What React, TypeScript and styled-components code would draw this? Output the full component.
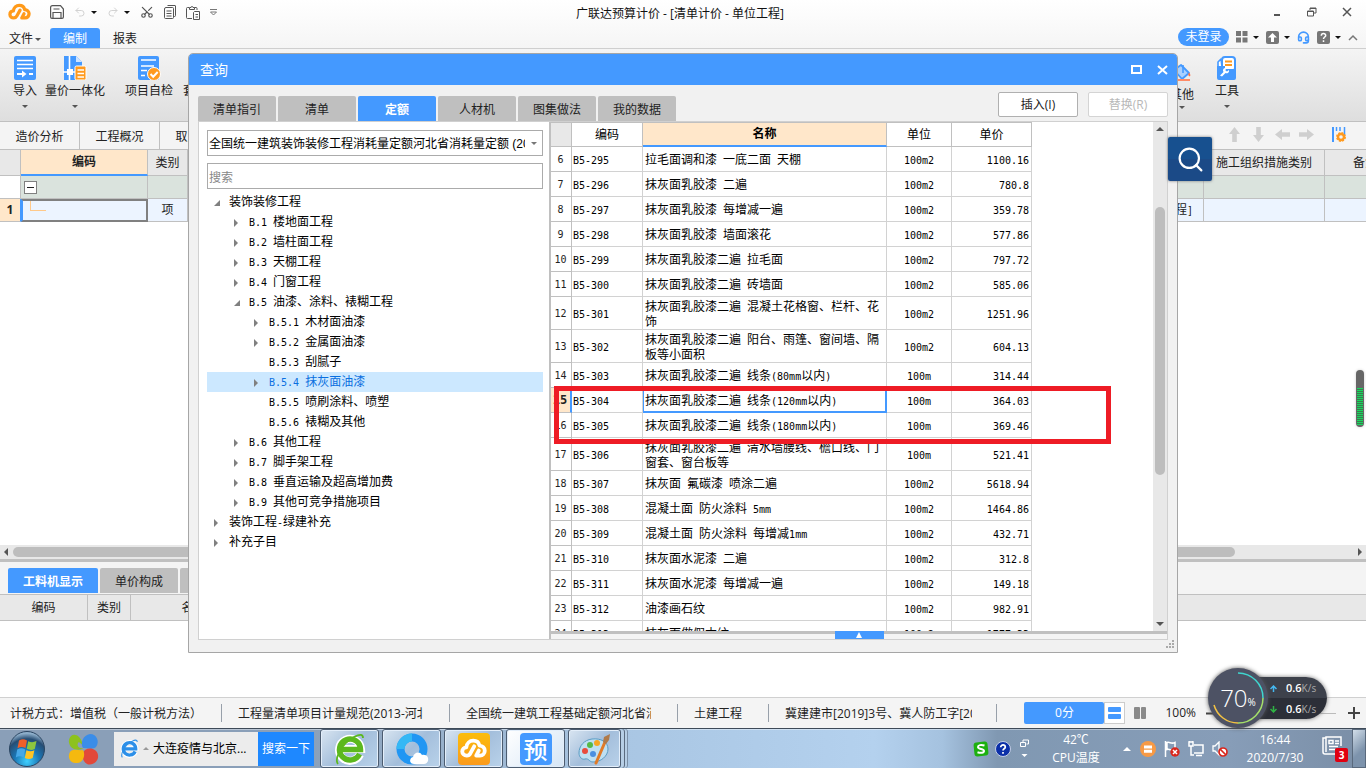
import React from "react";
import styled, { createGlobalStyle, css } from "styled-components";
import { Undo2, Redo2, Scissors, Search, ClipboardPaste, Headset } from "lucide-react";

const BLUE = "#4499ff";
const LINE = "#c0c0c0";
const PEACH = "#ffe7ca";

const GlobalStyle = createGlobalStyle`
  * { box-sizing: border-box; }
  body {
    margin: 0;
    background: #fff;
    color: #222;
    font: 12px/16px "Open Sans", "Noto Sans CJK SC", sans-serif;
  }
  button, input, select { font: inherit; color: inherit; margin: 0; padding: 0; border: 0; background: none; }
  svg { display: block; flex: none; }
`;

/* ---------- shared parts ---------- */

const Screen = styled.div`
  position: relative;
  display: flex;
  flex-direction: column;
  min-height: 100vh;
  overflow: hidden;
`;

const Half = styled.span`
  font-family: "DejaVu Sans Mono", monospace;
  font-size: 10px;
  white-space: pre-wrap;
`;

/* Latin runs take half the width of a Chinese character, as in a bitmap song face. */
function Song({ children }: { children: string }) {
  return (
    <>
      {children.split(/([\x20-\x7e]+)/).map((part, i) =>
        i % 2 ? <Half key={i}>{part}</Half> : part
      )}
    </>
  );
}

const Caret = styled.i<{ $dir?: "up" | "down" | "left" | "right" | "open"; $size?: number; $color?: string }>`
  flex: none;
  width: 0;
  height: 0;
  border: ${(p) => p.$size ?? 3}px solid transparent;
  ${(p) => {
    const c = p.$color ?? "#555";
    switch (p.$dir ?? "down") {
      case "up": return css`border-bottom-color: ${c}; border-top-width: 0;`;
      case "left": return css`border-right-color: ${c}; border-left-width: 0;`;
      case "right": return css`border-left-color: ${c}; border-right-width: 0;`;
      case "open": return css`border-right-color: ${c}; border-bottom-color: ${c};`;
      default: return css`border-top-color: ${c}; border-bottom-width: 0;`;
    }
  }}
`;

const Cloud = ({ color, width }: { color: string; width: number }) => (
  <svg width={width} viewBox="0 0 24 18" fill="none" stroke={color} strokeWidth="3.4" strokeLinecap="round" strokeLinejoin="round">
    <path d="M12.6 7.4 9.2 13.6C8.5 15 7.5 15.6 6 15.6 3.7 15.6 2 14 2 12c0-2.200 1.600-3.600 3.600-3.700C6 4.800 8.500 2.400 11.800 2.400c3 0 5 1.800 5.600 4.400C20 7 22 8.800 22 11.300c0 2.500-1.800 4.300-4.200 4.300H14.400l2.300-4.400" />
  </svg>
);

/* ---------- title bar and menu ---------- */

const Header = styled.header`
  background: linear-gradient(#fff, #f5f5f5);
  border-bottom: 1px solid #cfcfcf;
`;

const TitleBar = styled.div`
  display: grid;
  grid-template-columns: 1fr auto 1fr;
  align-items: center;
  height: 28px;
  padding: 0 14px 4px 8px;
`;

const Title = styled.h1`
  margin: 0;
  padding-top: 3px;
  font-size: 12px;
  font-weight: 400;
  color: #111;
`;

const QuickBar = styled.div`
  display: flex;
  align-items: center;
  gap: 10px;
`;

const QuickButton = styled.button<{ $faded?: boolean }>`
  display: flex;
  align-items: center;
  gap: 5px;
  color: ${(p) => (p.$faded ? "#d2d2d2" : "#555")};
`;

const LogoSlot = styled.div`
  width: 32px;
`;

const WindowButtons = styled.div`
  display: flex;
  justify-content: flex-end;
  gap: 25px;
  color: #555;
`;

const MenuBar = styled.nav`
  display: flex;
  align-items: center;
  height: 20px;
`;

const MenuItem = styled.button<{ $active?: boolean }>`
  display: flex;
  align-items: center;
  justify-content: center;
  gap: 2px;
  width: 50px;
  height: 20px;
  padding-top: 2px;
  border-radius: 3px 3px 0 0;
  background: ${(p) => (p.$active ? BLUE : "transparent")};
  color: ${(p) => (p.$active ? "#fff" : "#222")};
`;

const MenuTools = styled.div`
  display: flex;
  align-items: center;
  gap: 7px;
  margin: 0 8px 2px auto;
`;

const LoginPill = styled.button`
  width: 51px;
  height: 18px;
  border-radius: 9px;
  background: ${BLUE};
  color: #fff;
  line-height: 18px;
`;

/* ---------- ribbon ---------- */

const Ribbon = styled.div`
  display: flex;
  gap: 6px;
  height: 73px;
  padding: 0 119px 0 9px;
  background: linear-gradient(#f4f4f4, #dedede);
  border-bottom: 1px solid ${LINE};
`;

const RibbonGroup = styled.div<{ $end?: boolean }>`
  display: flex;
  gap: ${(p) => (p.$end ? 5 : 0)}px;
  margin-left: ${(p) => (p.$end ? "auto" : 0)};
`;

const RibbonButton = styled.button<{ $width: number }>`
  display: flex;
  flex-direction: column;
  align-items: center;
  justify-content: space-between;
  width: ${(p) => p.$width}px;
  height: 59px;
  padding-top: 7px;
  white-space: nowrap;
`;

const RibbonFace = styled.span`
  display: flex;
  flex-direction: column;
  align-items: center;
  line-height: 22px;
`;

const ImportIcon = () => (
  <svg width="24" height="24" viewBox="0 0 24 24">
    <rect x="1" width="22" height="24" rx="2" fill={BLUE} />
    <path d="M4 4.500h16M4 8.500h16M4 12.500h16" stroke="#fff" strokeWidth="1.600" />
    <path d="M4 18h7M16 18h4" stroke="#fff" strokeWidth="2" />
    <path d="M9 14.500 13.500 18 9 21.500z" fill="#fff" />
  </svg>
);

const PriceIcon = () => (
  <svg width="24" height="24" viewBox="0 0 24 24">
    <path d="M1 0h12l6 6v18H1z" fill={BLUE} />
    <path d="M13 0v6h6z" fill="#cfe4ff" />
    <path d="M6.500 0v24M0 16h12" stroke="#fff" strokeWidth="1.600" />
    <rect x="4" y="13" width="6" height="6" fill="#fff" />
    <rect x="12" y="10" width="11" height="14" rx="1.500" fill="#ff9a1f" stroke="#fff" />
    <path d="M14.500 14h6.500M14.500 17.500h6.500M14.500 21h6.500" stroke="#fff" strokeWidth="1.300" />
  </svg>
);

const CheckIcon = () => (
  <svg width="24" height="24" viewBox="0 0 24 24">
    <rect x="1" width="21" height="24" rx="2" fill={BLUE} />
    <path d="M4 4h15M4 10h13M4 14.500h6M4 19.500h4" stroke="#fff" strokeWidth="1.600" />
    <circle cx="17" cy="18" r="6.500" fill="#ff9a1f" stroke="#fff" />
    <path d="m13.500 18 2.700 2.700 4.500-4.700" fill="none" stroke="#fff" strokeWidth="2" />
  </svg>
);

const BucketIcon = () => (
  <svg width="28" height="28" viewBox="0 0 28 28">
    <path d="M6 14 13 9l8 8-7 6z" fill="#a9d0ff" stroke={BLUE} strokeWidth="1.800" strokeLinejoin="round" />
    <path d="M15 9v8" stroke={BLUE} strokeWidth="1.600" />
    <path d="M21 16.500c1.500 2 2 3 .5 4-1.500-1-1.500-2-.5-4z" fill="#ff7043" />
    <path d="M4 24h18" stroke="#ff8a65" strokeWidth="2" />
  </svg>
);

const ToolboxIcon = () => (
  <svg width="24" height="24" viewBox="0 0 24 24">
    <rect x="7" y="1" width="13" height="14" rx="3" fill="#fff" stroke={BLUE} strokeWidth="2" />
    <path d="M10 5.500h7M10 9h7" stroke="#ff9a1f" strokeWidth="1.800" />
    <path d="M6 3 3 6v5h4z" fill="#fff" stroke={BLUE} strokeWidth="1.600" strokeLinejoin="round" />
    <path d="M2 10h8v3h9l2-1v10a2 2 0 0 1-2 2H4a2 2 0 0 1-2-2z" fill={BLUE} />
    <path d="m5 19.500 3.500-3.500a2.500 2.500 0 0 1 2.500-4l-.5 2.500 1.500 1 2-1.500a2.500 2.500 0 0 1-3.500 3L7 20.500z" fill="#fff" />
  </svg>
);

/* ---------- workspace ---------- */

const PageTabs = styled.nav`
  display: flex;
  align-items: center;
  height: 27px;
  background: #f4f4f4;
`;

const PageTab = styled.button`
  width: 80px;
  height: 27px;
  padding-top: 2px;
  border-right: 1px solid ${LINE};
`;

const RowTools = styled.div`
  display: flex;
  align-items: center;
  gap: 9px;
  margin: 0 19px 2px auto;
`;

const Grid = styled.div`
  flex: 1;
  min-height: 395px;
  overflow: hidden;
`;

const Sheet = styled.table`
  width: calc(100% + 40px);
  table-layout: fixed;
  border-collapse: separate;
  border-spacing: 0;
  color: #222;

  th, td {
    height: 23px;
    padding: 0;
    border-right: 1px solid ${LINE};
    border-bottom: 1px solid ${LINE};
    text-align: center;
    font-weight: 400;
    white-space: nowrap;
    overflow: hidden;
  }
  thead th {
    height: 27px;
    background: #e8e8e8;
    border-top: 1px solid ${LINE};
  }
  thead th.active {
    background: ${PEACH};
    border-bottom: 2px solid ${BLUE};
    font-weight: 700;
  }
  tr.group td { background: #dae3dd; }
  tr.group td:first-child { background: #fff; }
  tr.item td { background: #ecf4ff; }
  tr.item td:first-child { background: ${PEACH}; font-weight: 700; border-right: 1px solid ${BLUE}; }
  tr.item td.selected { border: 2px solid #808080; border-left-color: ${BLUE}; }
`;

const Expander = styled.button`
  display: block;
  width: 13px;
  height: 13px;
  margin-left: 3px;
  border: 1px solid #808080;
  background: linear-gradient(#222, #222) center / 7px 1px no-repeat #fff;
`;

const Branch = styled.span`
  display: block;
  width: 16px;
  height: 10px;
  margin: -10px 0 0 7px;
  border: solid #ffc98a;
  border-width: 0 0 1px 1px;
`;

const HScroll = styled.div`
  display: flex;
  align-items: center;
  justify-content: space-between;
  height: 14px;
  padding: 0 4px;
  background: #e8e8e8;
`;

const HThumb = styled.div`
  width: 90%;
  height: 10px;
  margin-left: 5px;
  margin-right: auto;
  border-radius: 5px;
  background: #bdbdbd;
`;

const Detail = styled.section`
  border-top: 3px solid ${LINE};
  background: #fff;
  height: 138px;
  overflow: hidden;
`;

const TabStrip = styled.div<{ $inset?: boolean }>`
  display: flex;
  align-items: flex-end;
  gap: 2px;
  ${(p) => p.$inset && css`height: 33px; padding: 0 8px 1px; background: #f4f4f4; border-bottom: 1px solid ${LINE};`}
`;

const Tab = styled.button<{ $active?: boolean; $width?: number }>`
  width: ${(p) => p.$width ?? 78}px;
  height: 25px;
  padding-top: 2px;
  border-radius: 2px 2px 0 0;
  background: ${(p) => (p.$active ? BLUE : "#bfbfbf")};
  color: ${(p) => (p.$active ? "#fff" : "#222")};
  font-weight: ${(p) => (p.$active ? 700 : 400)};
`;

const DetailTable = styled.table`
  width: 100%;
  table-layout: fixed;
  border-spacing: 0;
  th {
    height: 26px;
    padding: 0;
    background: #e8e8e8;
    border-right: 1px solid ${LINE};
    border-bottom: 1px solid ${LINE};
    font-weight: 400;
  }
  th:last-child { border-right: 0; }
`;

/* ---------- query dialog ---------- */

const Dialog = styled.section`
  position: absolute;
  top: 53px;
  left: 188px;
  right: 188px;
  height: 600px;
  display: flex;
  flex-direction: column;
  border: 1px solid #a6a6a6;
  border-radius: 5px 5px 0 0;
  background: #f1f1f1;
`;

const DialogHead = styled.header`
  display: flex;
  align-items: center;
  height: 31px;
  padding: 0 9px 0 11px;
  border-radius: 4px 4px 0 0;
  background: ${BLUE};
  color: #fff;
  h2 { margin: 0 auto 0 0; font-size: 14px; font-weight: 400; }
  button { margin-left: 15px; }
`;

const DialogTools = styled.div`
  display: flex;
  align-items: flex-end;
  height: 36px;
  padding: 0 9px;
`;

const Actions = styled.div`
  display: flex;
  gap: 10px;
  margin: 0 0 4px auto;
`;

const ActionButton = styled.button`
  width: 80px;
  height: 25px;
  border: 1px solid #b0b0b0;
  border-radius: 2px;
  background: #fff;
  &:disabled { color: #b8b8b8; border-color: #d4d4d4; }
`;

const DialogBody = styled.div`
  display: flex;
  flex: 1;
  min-height: 0;
  margin: 0 9px 12px;
  border: 1px solid #d0d0d0;
  background: #fff;
`;

const TreePane = styled.div`
  width: 350px;
  padding: 8px 6px 0 8px;
  color: #000;
`;

const SelectBox = styled.label`
  display: flex;
  align-items: center;
  height: 26px;
  padding-right: 5px;
  border: 1px solid #ababab;
  select {
    flex: 1;
    min-width: 0;
    height: 24px;
    padding: 1px 0 0 1px;
    margin-right: 6px;
    appearance: none;
    outline: 0;
    overflow: hidden;
    font-family: "Liberation Sans", "Noto Sans CJK SC", sans-serif;
  }
`;

const SearchBox = styled.input`
  display: block;
  width: 100%;
  height: 26px;
  margin: 7px 0 3px;
  padding: 2px 0 0 1px;
  border: 1px solid #ababab;
  &::placeholder { color: #888; opacity: 1; }
`;

const Tree = styled.ul`
  margin: 0;
  padding: 0;
  list-style: none;
`;

const TreeRow = styled.li<{ $level: number; $selected?: boolean }>`
  display: flex;
  align-items: center;
  height: 20px;
  padding-left: ${(p) => 6 + p.$level * 20}px;
  background: ${(p) => (p.$selected ? "#cce8ff" : "transparent")};
  color: ${(p) => (p.$selected ? "#0a6fe0" : "#000")};
`;

const Twist = styled.span`
  display: flex;
  width: 16px;
  padding: 1px 0 0 1px;
`;

const ResultPane = styled.div`
  position: relative;
  display: flex;
  flex-direction: column;
  flex: 1;
  min-width: 0;
  border-left: 2px solid ${LINE};
`;

const ResultScroll = styled.div`
  display: flex;
  justify-content: space-between;
  flex: 1;
  min-height: 0;
  overflow: hidden;
`;

const Results = styled.table`
  width: 481px;
  height: max-content;
  table-layout: fixed;
  border-collapse: separate;
  border-spacing: 0;
  color: #000;

  th, td {
    height: 25px;
    padding: 2px 0 0;
    border-right: 1px solid #d2d2d2;
    border-bottom: 1px solid #d2d2d2;
    text-align: center;
    font-weight: 400;
    line-height: 14px;
  }
  thead th {
    padding: 0;
    border-top: 1px solid ${LINE};
    border-color: ${LINE};
  }
  thead th:first-child { background: #e8e8e8; }
  thead th.active {
    background: ${PEACH};
    border-bottom: 2px solid ${BLUE};
    font-weight: 700;
  }
  tbody th { color: #222; border-color: ${LINE}; padding: 0 1px 0 0; }
  td.code { text-align: left; padding-left: 1px; }
  td.name { text-align: left; padding-left: 2px; }
  td.price { text-align: right; padding-right: 2px; }
  tr.tall > * { height: 33px; }
  tr.current th {
    background: ${PEACH};
    font-weight: 700;
    border-right: 2px solid ${BLUE};
    ${Half} { font-size: 12px; }
  }
  tr.current td.name { box-shadow: inset 1px 1px ${BLUE}, inset -1px -1px ${BLUE}; border-color: ${BLUE}; }
`;

const VScroll = styled.div`
  display: flex;
  flex-direction: column;
  align-items: center;
  width: 14px;
  padding: 5px 0;
  background: #e8e8e8;
`;

const VThumb = styled.div`
  width: 10px;
  height: 268px;
  margin: 76px 0 auto;
  border-radius: 5px;
  background: #bdbdbd;
`;

const Fold = styled.div`
  display: flex;
  justify-content: center;
  height: 8px;
  border-top: 3px solid ${LINE};
  background: #f4f4f4;
`;

const FoldButton = styled.button`
  display: flex;
  align-items: center;
  justify-content: center;
  width: 49px;
  height: 8px;
  margin-top: -3px;
  background: ${BLUE};
`;

const Marker = styled.div`
  position: absolute;
  top: 264px;
  left: 3px;
  width: 557px;
  height: 58px;
  border: 5px solid #ee1c25;
`;

const Grip = styled.svg`
  position: absolute;
  right: 3px;
  bottom: 4px;
`;

/* ---------- desktop overlays ---------- */

const FloatSearch = styled.button`
  position: absolute;
  top: 137px;
  right: 154px;
  display: flex;
  align-items: center;
  justify-content: center;
  width: 44px;
  height: 44px;
  border-radius: 2px;
  background: linear-gradient(#17508f 50%, #1b4a87 50%);
  box-shadow: 0 0 3px #777;
  color: #fff;
`;

const Meter = styled.div`
  position: absolute;
  top: 370px;
  right: 2px;
  width: 8px;
  height: 57px;
  padding: 18px 1px 2px;
  border-radius: 4px;
  background: #666;
  box-shadow: 0 0 3px #ccc;
  &::before {
    content: "";
    display: block;
    height: 100%;
    background: repeating-linear-gradient(#19d65e 0 1px, #3c7a50 1px 2px);
  }
`;

const Gadget = styled.aside`
  position: absolute;
  right: 39px;
  bottom: 40px;
  display: flex;
  align-items: center;
  width: 119px;
  height: 60px;
`;

const GadgetDial = styled.div`
  position: relative;
  z-index: 1;
  display: flex;
  align-items: center;
  justify-content: center;
  width: 60px;
  height: 60px;
  border-radius: 50%;
  background: #4d5264;
  box-shadow: 0 0 4px #555;
  color: #fff;
  font: 300 24px/24px "Open Sans", sans-serif;
  small { font-size: 10px; font-weight: 400; padding-top: 8px; }
  svg { position: absolute; inset: 0; }
`;

const GadgetSpeeds = styled.div`
  flex: 1;
  display: grid;
  height: 42px;
  margin-left: -20px;
  padding-left: 22px;
  border-radius: 0 21px 21px 0;
  background: linear-gradient(#3d414b 50%, #2c2f38 50%);
  box-shadow: 0 0 4px #777;
  color: #fff;
  font-size: 11px;
  span { display: flex; align-items: center; gap: 9px; padding-top: 1px; }
  b { font-weight: 600; }
  em { font-style: normal; font-weight: 400; font-size: 10px; color: #aaa; }
`;

/* ---------- status bar ---------- */

const Status = styled.footer`
  display: flex;
  align-items: center;
  height: 31px;
  border-top: 1px solid #d0d0d0;
  background: #f4f4f4;
`;

const StatusItem = styled.div<{ $cell: number; $text: number }>`
  flex: none;
  width: ${(p) => p.$cell}px;
  height: 18px;
  border-right: 1px solid #98a0aa;
  line-height: 20px;
  > span {
    display: block;
    width: ${(p) => p.$text}px;
    margin-left: 16px;
    overflow: hidden;
    white-space: nowrap;
  }
  &:first-child > span { margin-left: 10px; }
`;

const StatusTools = styled.div`
  display: flex;
  align-items: center;
  margin: 0 6px 0 auto;
`;

const Score = styled.button`
  width: 80px;
  height: 22px;
  border-radius: 2px;
  background: ${BLUE};
  color: #fff;
`;

const ViewButton = styled.button<{ $on?: boolean }>`
  display: flex;
  align-items: center;
  justify-content: center;
  width: 21px;
  height: 22px;
  border: 1px solid ${(p) => (p.$on ? "#ccc" : "transparent")};
  background: ${(p) => (p.$on ? "#fff" : "transparent")};
  & + & { margin-left: 5px; }
`;

const Zoom = styled.label`
  display: flex;
  align-items: center;
  gap: 10px;
  margin-left: 14px;
  color: #222;
  input {
    appearance: none;
    width: 107px;
    height: 1px;
    margin: 0 2px;
    background: #bbb;
  }
  input::-webkit-slider-thumb {
    appearance: none;
    width: 11px;
    height: 11px;
    border: 1px solid #888;
    border-radius: 50%;
    background: #f4f4f4;
  }
`;

/* ---------- taskbar ---------- */

const Taskbar = styled.footer`
  display: flex;
  align-items: center;
  height: 40px;
  border-top: 1px solid #3e4a58;
  background:
    linear-gradient(#ffffff66 0 1px, transparent 1px),
    linear-gradient(90deg, #8a9fb8 0, #8a9fb8 22%, #a9c6e3 45%, #b4d1ee 64%, #a5c2df 69%, #8098b2 73%, #879db8 90%, #7a8ea6);
`;

const TaskIcon = styled.button`
  margin-left: 9px;
`;

const NewsBox = styled.div`
  display: flex;
  align-items: center;
  gap: 4px;
  width: 144px;
  height: 34px;
  margin-left: 14px;
  padding-left: 6px;
  background: #ececec;
  color: #000;
  white-space: nowrap;
`;

const NewsButton = styled.button`
  width: 56px;
  height: 34px;
  margin-right: 6px;
  background: #1e88ff;
  color: #fff;
`;

const TaskButton = styled.button<{ $active?: boolean; $last?: boolean }>`
  display: flex;
  align-items: center;
  justify-content: center;
  width: ${(p) => (p.$last ? 53 : 59)}px;
  height: 39px;
  margin-right: 3px;
  border: 1px solid #4c5c70;
  border-radius: 3px;
  box-shadow: inset 0 0 0 1px #e3eefa;
  background: ${(p) =>
    p.$active ? "linear-gradient(135deg, #fff, #d5e5f5)" : "linear-gradient(135deg, #d9e5f1, #a3bedb 50%, #b9d2ea)"};
  ${(p) => p.$last && css`box-shadow: inset 0 0 0 1px #e3eefa, 3px 0 #b7cfe6, 4px 0 #5b6c80, 6px 0 #b7cfe6, 7px 0 #7b90a8;`}
`;

const AppTile = styled.span<{ $orange?: boolean }>`
  display: flex;
  align-items: center;
  justify-content: center;
  width: 32px;
  height: 32px;
  border-radius: 4px;
  background: ${(p) => (p.$orange ? "linear-gradient(#fbbd0a, #fb9a1c)" : BLUE)};
  color: #fff;
  font: 500 24px/30px "Noto Sans CJK SC", sans-serif;
`;

const Tray = styled.div`
  display: flex;
  align-items: center;
  gap: 9px;
  height: 39px;
  margin-left: auto;
  color: #fff;
`;

const TrayGroup = styled.div<{ $gap: number }>`
  display: flex;
  align-items: center;
  gap: ${(p) => p.$gap}px;
`;

const TrayText = styled.div<{ $width: number }>`
  width: ${(p) => p.$width}px;
  text-align: center;
  line-height: 18px;
`;

const NoteBadge = styled.div`
  position: relative;
  width: 26px;
  height: 26px;
  b {
    position: absolute;
    right: 0;
    bottom: 0;
    width: 13px;
    height: 14px;
    background: #e00010;
    border-radius: 2px;
    font-size: 10px;
    line-height: 14px;
    text-align: center;
  }
`;

const ShowDesktop = styled.button`
  width: 14px;
  height: 39px;
  margin-left: -5px;
  border: 1px solid #5a6a7d;
  background: linear-gradient(135deg, #d2dee9, #7d93ac 60%);
`;

/* ---------- data ---------- */

type Node = [level: number, state: "open" | "closed" | "leaf", label: string];

const TREE: Node[] = [
  [0, "open", "装饰装修工程"],
  [1, "closed", "B.1 楼地面工程"],
  [1, "closed", "B.2 墙柱面工程"],
  [1, "closed", "B.3 天棚工程"],
  [1, "closed", "B.4 门窗工程"],
  [1, "open", "B.5 油漆、涂料、裱糊工程"],
  [2, "closed", "B.5.1 木材面油漆"],
  [2, "closed", "B.5.2 金属面油漆"],
  [2, "leaf", "B.5.3 刮腻子"],
  [2, "closed", "B.5.4 抹灰面油漆"],
  [2, "leaf", "B.5.5 喷刷涂料、喷塑"],
  [2, "leaf", "B.5.6 裱糊及其他"],
  [1, "closed", "B.6 其他工程"],
  [1, "closed", "B.7 脚手架工程"],
  [1, "closed", "B.8 垂直运输及超高增加费"],
  [1, "closed", "B.9 其他可竞争措施项目"],
  [0, "closed", "装饰工程-绿建补充"],
  [0, "closed", "补充子目"],
];
const SELECTED_NODE = 9;

type Quota = [name: string, unit: string, price: string];

const QUOTAS: Quota[] = [
  ["拉毛面调和漆 一底二面 天棚", "100m2", "1100.16"],
  ["抹灰面乳胶漆 二遍", "100m2", "780.8"],
  ["抹灰面乳胶漆 每增减一遍", "100m2", "359.78"],
  ["抹灰面乳胶漆 墙面滚花", "100m2", "577.86"],
  ["抹灰面乳胶漆二遍 拉毛面", "100m2", "797.72"],
  ["抹灰面乳胶漆二遍 砖墙面", "100m2", "585.06"],
  ["抹灰面乳胶漆二遍 混凝土花格窗、栏杆、花饰", "100m2", "1251.96"],
  ["抹灰面乳胶漆二遍 阳台、雨篷、窗间墙、隔板等小面积", "100m2", "604.13"],
  ["抹灰面乳胶漆二遍 线条(80mm以内)", "100m", "314.44"],
  ["抹灰面乳胶漆二遍 线条(120mm以内)", "100m", "364.03"],
  ["抹灰面乳胶漆二遍 线条(180mm以内)", "100m", "369.46"],
  ["抹灰面乳胶漆二遍 清水墙腰线、檐口线、门窗套、窗台板等", "100m", "521.41"],
  ["抹灰面 氟碳漆 喷涂二遍", "100m2", "5618.94"],
  ["混凝土面 防火涂料 5mm", "100m2", "1464.86"],
  ["混凝土面 防火涂料 每增减1mm", "100m2", "432.71"],
  ["抹灰面水泥漆 二遍", "100m2", "312.8"],
  ["抹灰面水泥漆 每增减一遍", "100m2", "149.18"],
  ["油漆画石纹", "100m2", "982.91"],
  ["抹灰面做假木纹", "100m2", "1777.33"],
];
const FIRST_ROW = 6;
const FIRST_CODE = 295;
const CURRENT_ROW = 15;

/* ---------- sections ---------- */

function AppHeader() {
  return (
    <Header>
      <TitleBar>
        <QuickBar>
          <LogoSlot><Cloud color="#ff9a1a" width={23} /></LogoSlot>
          <QuickButton aria-label="保存">
            <svg width="14" height="14" viewBox="0 0 14 14" fill="none" stroke="currentColor" strokeWidth="1.200">
              <path d="M.6 2.500V12a1.400 1.400 0 0 0 1.400 1.400h10A1.400 1.400 0 0 0 13.400 12V4L10.500.6H2.500A1.900 1.900 0 0 0 .6 2.500zM3 13V7.500h8V13M3.500 4h6" />
            </svg>
          </QuickButton>
          <QuickButton $faded aria-label="撤销"><Undo2 size={12} /><Caret $color="#111" /></QuickButton>
          <QuickButton $faded aria-label="恢复"><Redo2 size={12} /><Caret $color="#111" /></QuickButton>
          <QuickButton aria-label="剪切"><Scissors size={14} strokeWidth={2} transform="rotate(-90)" /></QuickButton>
          <QuickButton aria-label="复制">
            <svg width="12" height="14" viewBox="0 0 12 14" fill="none" stroke="currentColor">
              <path d="M3.500.5H11a.5.5 0 0 1 .5.5v9.500a1 1 0 0 1-1 1H9.500M2 2.500h6.500a1 1 0 0 1 1 1v9a1 1 0 0 1-1 1H1.500a1 1 0 0 1-1-1V4A1.500 1.500 0 0 1 2 2.500zM2.500 6h5M2.500 8.500h5M2.500 11h5" />
            </svg>
          </QuickButton>
          <QuickButton aria-label="粘贴">
            <svg width="14" height="15" viewBox="0 0 14 15" fill="none" stroke="currentColor">
              <path d="M6 13.500H1.500a1 1 0 0 1-1-1v-9a1 1 0 0 1 1-1H3M8.500 2.500h1.500a1 1 0 0 1 1 1V5M3.500 4.500h5v-2H7a1 1 0 0 0-2 0H3.500zM8.500 6.500h5v8h-6v-7zM9.500 9.500h2.500M9.500 12h2.500" />
            </svg>
          </QuickButton>
          <QuickButton aria-label="更多">
            <svg width="7" height="7" viewBox="0 0 7 7" fill="none" stroke="#777"><path d="M0 .5h7M.5 3h6l-3 3z" /></svg>
          </QuickButton>
        </QuickBar>
        <Title>广联达预算计价 - [清单计价 - 单位工程]</Title>
        <WindowButtons>
          <button aria-label="最小化"><svg width="10" height="10" viewBox="0 0 10 10"><path d="M2 8h6" stroke="currentColor" strokeWidth="2" /></svg></button>
          <button aria-label="还原">
            <svg width="10" height="10" viewBox="0 0 10 10" fill="none" stroke="currentColor"><path d="M3 3V1h6v5H7M.5 4h6v5h-6zM.5 4.500h6M3 1.500h6" /></svg>
          </button>
          <button aria-label="关闭"><svg width="10" height="10" viewBox="0 0 10 10"><path d="m1 1 8 8M9 1 1 9" stroke="currentColor" strokeWidth="1.500" /></svg></button>
        </WindowButtons>
      </TitleBar>
      <MenuBar>
        <MenuItem>文件<Caret $size={3} /></MenuItem>
        <MenuItem $active>编制</MenuItem>
        <MenuItem>报表</MenuItem>
        <MenuTools>
          <LoginPill>未登录</LoginPill>
          <QuickButton aria-label="布局">
            <svg width="12" height="12" viewBox="0 0 12 12" fill="#777"><path d="M0 0h5v5H0zM6.500 0h5v5h-5zM0 6.500h5v5H0zM6.500 6.500h5v5h-5z" /></svg>
            <Caret $color="#111" />
          </QuickButton>
          <QuickButton aria-label="升级">
            <svg width="13" height="13" viewBox="0 0 13 13"><rect width="13" height="13" rx="2" fill="#777" /><path d="M6.500 2 11 6.500H8V11H5V6.500H2z" fill="#fff" /></svg>
            <Caret $color="#111" />
          </QuickButton>
          <QuickButton aria-label="客服"><Headset size={13} color={BLUE} strokeWidth={3} /></QuickButton>
          <QuickButton aria-label="帮助">
            <svg width="13" height="13" viewBox="0 0 13 13"><rect width="13" height="13" rx="2" fill="#777" /><path d="M4.300 4.800c0-3 4.600-2.800 4.400-.2C8.600 6 6.500 6.200 6.500 8M6.500 9.300V11" fill="none" stroke="#fff" strokeWidth="1.500" /></svg>
            <Caret $color="#111" />
          </QuickButton>
          <QuickButton aria-label="收起"><svg width="10" height="7" viewBox="0 0 10 7" fill="none" stroke="#777" strokeWidth="1.500"><path d="m1 6 4-4 4 4" /></svg></QuickButton>
        </MenuTools>
      </MenuBar>
    </Header>
  );
}

function RibbonItem({ icon, label, width, menu = true }: { icon: React.ReactNode; label: string; width: number; menu?: boolean }) {
  return (
    <RibbonButton $width={width}>
      <RibbonFace>{icon}{label}</RibbonFace>
      {menu && <Caret />}
    </RibbonButton>
  );
}

const ARROWS = [0, 180, 270, 90];

function Workspace() {
  return (
    <>
      <Ribbon>
        <RibbonGroup>
          <RibbonItem width={32} label="导入" icon={<ImportIcon />} />
          <RibbonItem width={68} label="量价一体化" icon={<PriceIcon />} />
        </RibbonGroup>
        <RibbonGroup>
          <RibbonItem width={68} label="项目自检" icon={<CheckIcon />} menu={false} />
          <RibbonItem width={48} label="套用组价" icon={<ImportIcon />} menu={false} />
        </RibbonGroup>
        <RibbonGroup $end>
          <RibbonItem width={40} label="其他" icon={<BucketIcon />} />
          <RibbonItem width={40} label="工具" icon={<ToolboxIcon />} />
        </RibbonGroup>
      </Ribbon>
      <PageTabs>
        <PageTab>造价分析</PageTab>
        <PageTab>工程概况</PageTab>
        <PageTab>取费设置</PageTab>
        <RowTools>
          {ARROWS.map((turn) => (
            <svg key={turn} width="15" height="15" viewBox="0 0 15 15" fill="#cfcfcf">
              <path transform={`rotate(${turn} 7.5 7.5)`} d="M7.500 0 13 7H9.800v8H5.200V7H2z" />
            </svg>
          ))}
          <svg width="24" height="15" viewBox="0 0 24 15">
            <path d="M10 0v15" stroke={BLUE} strokeWidth="2" />
            <path d="M13.500 0v4M17 0v4M21.500 0v8" stroke={BLUE} strokeWidth="1.500" />
            <circle cx="18" cy="10" r="3" fill="none" stroke="#ff9a1f" strokeWidth="2.400" />
            <circle cx="18" cy="10" r="4.200" fill="none" stroke="#ff9a1f" strokeWidth="1.500" strokeDasharray="2 1.300" />
          </svg>
        </RowTools>
      </PageTabs>
      <Grid>
        <Sheet>
          <colgroup>
            <col style={{ width: 21 }} /><col style={{ width: 127 }} /><col style={{ width: 40 }} /><col />
            <col style={{ width: 81 }} /><col style={{ width: 121 }} /><col style={{ width: 81 }} />
          </colgroup>
          <thead>
            <tr><th /><th className="active">编码</th><th>类别</th><th /><th /><th>施工组织措施类别</th><th>备注</th></tr>
          </thead>
          <tbody>
            <tr className="group"><td /><td><Expander aria-label="折叠" /></td><td /><td /><td /><td /><td /></tr>
            <tr className="item"><td>1</td><td className="selected"><Branch /></td><td>项</td><td /><td><Song>[建筑工程]</Song></td><td /><td /></tr>
          </tbody>
        </Sheet>
      </Grid>
      <HScroll>
        <Caret $dir="left" $size={4} />
        <HThumb />
        <Caret $dir="right" $size={4} />
      </HScroll>
      <Detail>
        <TabStrip $inset>
          <Tab $active $width={90}>工料机显示</Tab>
          <Tab>单价构成</Tab>
          <Tab aria-label="标准换算" />
        </TabStrip>
        <DetailTable>
          <colgroup><col style={{ width: 88 }} /><col style={{ width: 43 }} /><col style={{ width: 126 }} /><col /></colgroup>
          <thead><tr><th>编码</th><th>类别</th><th>名称</th><th /></tr></thead>
        </DetailTable>
      </Detail>
    </>
  );
}

const DIALOG_TABS = ["清单指引", "清单", "定额", "人材机", "图集做法", "我的数据"];

function QueryDialog() {
  return (
    <Dialog role="dialog" aria-label="查询">
      <DialogHead>
        <h2>查询</h2>
        <button aria-label="最大化"><svg width="11" height="9" viewBox="0 0 11 9"><path d="M1 1h9v7H1z" fill="none" stroke="#fff" strokeWidth="2" /></svg></button>
        <button aria-label="关闭"><svg width="11" height="10" viewBox="0 0 11 10"><path d="m1 1 9 8M10 1 1 9" stroke="#fff" strokeWidth="2" /></svg></button>
      </DialogHead>
      <DialogTools>
        <TabStrip>
          {DIALOG_TABS.map((t) => <Tab key={t} $active={t === "定额"}>{t}</Tab>)}
        </TabStrip>
        <Actions>
          <ActionButton>插入(I)</ActionButton>
          <ActionButton disabled>替换(R)</ActionButton>
        </Actions>
      </DialogTools>
      <DialogBody>
        <TreePane>
          <SelectBox>
            <select aria-label="定额库">
              <option>全国统一建筑装饰装修工程消耗量定额河北省消耗量定额 (2012)</option>
            </select>
            <Caret $size={3} $color="#777" />
          </SelectBox>
          <SearchBox placeholder="搜索" aria-label="搜索" />
          <Tree>
            {TREE.map(([level, state, label], i) => (
              <TreeRow key={label} $level={level} $selected={i === SELECTED_NODE}>
                <Twist>
                  {state === "open" && <Caret $dir="open" $color="#808080" />}
                  {state === "closed" && <Caret $dir="right" $size={4} $color="#808080" />}
                </Twist>
                <span><Song>{label}</Song></span>
              </TreeRow>
            ))}
          </Tree>
        </TreePane>
        <ResultPane>
          <ResultScroll>
            <Results>
              <colgroup>
                <col style={{ width: 21 }} /><col style={{ width: 71 }} /><col style={{ width: 244 }} />
                <col style={{ width: 65 }} /><col style={{ width: 80 }} />
              </colgroup>
              <thead>
                <tr><th /><th>编码</th><th className="active">名称</th><th>单位</th><th>单价</th></tr>
              </thead>
              <tbody>
                {QUOTAS.map(([name, unit, price], i) => {
                  const row = FIRST_ROW + i;
                  const kind = row === CURRENT_ROW ? "current" : name.length > 20 && !name.includes("(") ? "tall" : undefined;
                  return (
                    <tr key={row} className={kind}>
                      <th scope="row"><Song>{String(row)}</Song></th>
                      <td className="code"><Song>{`B5-${FIRST_CODE + i}`}</Song></td>
                      <td className="name"><Song>{name}</Song></td>
                      <td><Song>{unit}</Song></td>
                      <td className="price"><Song>{price}</Song></td>
                    </tr>
                  );
                })}
              </tbody>
            </Results>
            <VScroll>
              <Caret $dir="up" $size={4} />
              <VThumb />
              <Caret $size={4} />
            </VScroll>
          </ResultScroll>
          <Fold>
            <FoldButton aria-label="展开">
              <svg width="6" height="6" viewBox="0 0 6 6"><path d="M3 0 6 6H0z" fill="#fff" /></svg>
            </FoldButton>
          </Fold>
          <Marker />
        </ResultPane>
      </DialogBody>
      <Grip width="8" height="8" viewBox="0 0 8 8" fill="#aaa">
        <path d="M6 0h2v2H6zM6 3h2v2H6zM3 3h2v2H3zM6 6h2v2H6zM3 6h2v2H3zM0 6h2v2H0z" />
      </Grip>
    </Dialog>
  );
}

function StatusBar() {
  return (
    <Status>
      <StatusItem $cell={222} $text={185}><span>计税方式：增值税（一般计税方法）</span></StatusItem>
      <StatusItem $cell={228} $text={185}><span>工程量清单项目计量规范(2013-河北)</span></StatusItem>
      <StatusItem $cell={228} $text={185}><span>全国统一建筑工程基础定额河北省消耗量定额</span></StatusItem>
      <StatusItem $cell={91} $text={50}><span>土建工程</span></StatusItem>
      <StatusItem $cell={228} $text={187}><span>冀建建市[2019]3号、冀人防工字[2019]</span></StatusItem>
      <StatusTools>
        <Score>0分</Score>
        <ViewButton $on aria-label="上下布局"><svg width="13" height="12" viewBox="0 0 13 12" fill={BLUE}><rect width="13" height="5" rx="1" /><rect y="7" width="13" height="5" rx="1" /></svg></ViewButton>
        <ViewButton aria-label="左右布局"><svg width="13" height="12" viewBox="0 0 13 12" fill="#8a8a8a"><rect width="6" height="12" rx="1" /><rect x="7" width="5" height="12" rx="1" /></svg></ViewButton>
        <Zoom>
          100%
          <svg width="11" height="11" viewBox="0 0 11 11"><path d="M0 5.500h11" stroke="#444" strokeWidth="2" /></svg>
          <input type="range" defaultValue={35} />
          <svg width="12" height="12" viewBox="0 0 12 12"><path d="M0 6h12M6 0v12" stroke="#444" strokeWidth="2" /></svg>
        </Zoom>
      </StatusTools>
    </Status>
  );
}

function DesktopBar() {
  return (
    <Taskbar>
      <TaskIcon aria-label="开始">
        <svg width="36" height="36" viewBox="0 0 36 36">
          <defs>
            <radialGradient id="orb" cx=".5" cy=".85" r=".8">
              <stop offset="0" stopColor="#3fd0ff" /><stop offset=".45" stopColor="#1a76b5" /><stop offset=".8" stopColor="#274d73" /><stop offset="1" stopColor="#8fb0cc" />
            </radialGradient>
          </defs>
          <circle cx="18" cy="18" r="17.500" fill="url(#orb)" stroke="#2b4561" />
          <path d="M10 9.500c3-1.700 5-1.600 8 0L16.500 17c-3-1.300-5-1.300-8 .2z" fill="#f0602a" />
          <path d="M19.200 10.200c3 1.300 5 1.300 8.300-.2L25.800 18c-3 1.400-5 1.200-8-.2z" fill="#8cc63f" />
          <path d="M8.200 18.500c3-1.500 5-1.500 8-.1l-1.600 7.800c-3-1.400-5-1.400-7.800.2z" fill="#46a8e8" />
          <path d="M17.400 19.200c3 1.300 5 1.400 8 .1L23.700 27c-3 1.500-5 1.300-7.900 0z" fill="#ffc425" />
        </svg>
      </TaskIcon>
      <TaskIcon aria-label="启动器">
        <svg width="46" height="32" viewBox="0 0 46 32">
          <path d="M29 12c0-1-1-2-1-3C26 3 21 0 17 3c-4 4-2 11 3 13 3 1 8 1 9-1-5 1-7-4-4-6 1 1 2 2 4 3z" fill="#8dc21f" />
          <path d="M29 15c-3-5 0-13 7-14 7 0 10 8 6 13-3 3-9 1-13 1z" fill="#3b8de8" />
          <path d="M31 17c5-3 12-1 13 5 1 7-6 11-11 9-5-3-6-10-2-14z" fill="#e2483a" />
          <path d="M29 17c3 5 0 13-6 13-7 1-10-6-7-11 3-4 9-1 13-2z" fill="#f5b90f" />
        </svg>
      </TaskIcon>
      <NewsBox>
        <IeLogo size={19} color="#2c8fe8" />
        <Caret $dir="up" $color="#999" />
        大连疫情与北京...
      </NewsBox>
      <NewsButton>搜索一下</NewsButton>
      <TaskButton aria-label="浏览器"><IeLogo size={32} color="#5cb81e" /></TaskButton>
      <TaskButton aria-label="QQ浏览器">
        <svg width="34" height="32" viewBox="0 0 34 32">
          <circle cx="17" cy="16" r="11.500" fill="none" stroke="#2196f3" strokeWidth="8" />
          <path d="M17 .5A15.500 15.500 0 0 0 1.500 16h8A7.500 7.500 0 0 1 17 8.500z" fill="#35b8f5" />
          <path d="M19 31c-5 0-5-6-1-7 1-5 7-6 9-2 5-1 7 3 6 6-1 2-2 3-4 3z" fill="#fff" />
        </svg>
      </TaskButton>
      <TaskButton aria-label="广联达"><AppTile $orange><Cloud color="#fff" width={27} /></AppTile></TaskButton>
      <TaskButton $active><AppTile>预</AppTile></TaskButton>
      <TaskButton $last aria-label="画图">
        <svg width="34" height="32" viewBox="0 0 34 32">
          <path d="M14 6C6 7 1 13 1 20c0 4 3 7 6 6 4-1 4 3 8 3 8 0 15-6 15-13S23 5 14 6z" fill="#bfe0f2" stroke="#5a9cc4" />
          <circle cx="7" cy="18" r="3" fill="#e84c3d" /><circle cx="12" cy="12" r="3" fill="#55b948" /><circle cx="19" cy="10" r="3" fill="#f6a623" /><circle cx="15" cy="21" r="3" fill="#4b8fe0" />
          <path d="M27 9 18 30" stroke="#e07b28" strokeWidth="3" strokeLinecap="round" />
          <path d="m25 9 1-5 6-3-1 6-3 4z" fill="#b07a4a" />
        </svg>
      </TaskButton>
      <Tray>
        <TrayGroup $gap={6}>
          <svg width="16" height="16" viewBox="0 0 16 16"><rect x="1" y="1" width="14" height="14" rx="3" fill="#1db010" transform="rotate(-6 8 8)" /><path d="M11.500 4.500C8 3.500 5 4 5 6c0 2.500 6 1.500 6 4 0 2-3.500 2.300-6.500 1.200" fill="none" stroke="#fff" strokeWidth="2" /></svg>
          <svg width="16" height="16" viewBox="0 0 16 16"><circle cx="8" cy="8" r="7.500" fill="#0b2fa8" stroke="#c5cfe6" /><path d="M5.700 6.300c0-3.200 4.800-3 4.600-.2C10.200 7.800 8 7.800 8 9.500M8 11v1.800" fill="none" stroke="#fff" strokeWidth="1.700" /></svg>
        </TrayGroup>
        <svg width="9" height="20" viewBox="0 0 9 20" fill="none" stroke="#fff"><path d="M3 3V1h5.500v4H6.500M.5 3.500h5v4h-5z" /><path d="M1.500 15h6l-3 3z" fill="#fff" stroke="none" /></svg>
        <TrayText $width={76}>42℃<br />CPU温度</TrayText>
        <Caret $dir="up" $size={4} $color="#fff" />
        <TrayGroup $gap={8}>
          <svg width="16" height="16" viewBox="0 0 16 16"><circle cx="8" cy="8" r="8" fill="#f79a45" /><path d="M4 4.500h8v3H4zM4 8.800h8v3H4z" fill="#fff" /></svg>
          <svg width="16" height="16" viewBox="0 0 16 16"><path d="M1.500 0v16M3 1.500c3-1 4 2 8 0v7c-4 2-5-1-8 0z" fill="none" stroke="#fff" strokeWidth="1.500" /><circle cx="11" cy="11" r="4.700" fill="#d9261c" /><path d="m9 9 4 4m0-4-4 4" stroke="#fff" strokeWidth="1.500" /></svg>
          <svg width="16" height="16" viewBox="0 0 16 16" fill="none" stroke="#fff" strokeWidth="1.500"><path d="M6 4h9v8H6M8 14.500h6M1 1h4v4H1zM3 5v9h3M1.500 0v1M4.500 0v1" /></svg>
          <svg width="16" height="16" viewBox="0 0 16 16"><path d="M1 5h2l4-4v13L3 10H1z" fill="none" stroke="#fff" strokeWidth="1.300" /><circle cx="11" cy="11" r="4" fill="#fff" stroke="#d9261c" strokeWidth="1.700" /><path d="m8 8 6 6" stroke="#d9261c" strokeWidth="1.700" /></svg>
        </TrayGroup>
        <TrayText $width={76}>16:44<br />2020/7/30</TrayText>
        <NoteBadge>
          <svg width="22" height="20" viewBox="0 0 22 20" fill="none" stroke="#fff" strokeWidth="1.500"><path d="M4 2H1v14a2 2 0 0 0 2 2h14M4 16V1h15v9M7 4.500h4v3H7zM13 5h4M13 7.500h4M7 10.500h9M7 13.500h6" /></svg>
          <b>3</b>
        </NoteBadge>
        <ShowDesktop aria-label="显示桌面" />
      </Tray>
    </Taskbar>
  );
}

function IeLogo({ size, color }: { size: number; color: string }) {
  return (
    <svg width={size} height={size} viewBox="0 0 32 32" fill="none">
      <path d="M26 21.500A11 11 0 1 1 27 16H8" stroke="#fff" strokeWidth="8" />
      <path d="M25.500 21A10.500 10.500 0 1 1 26.500 16.500H8" stroke={color} strokeWidth="5.500" />
      <path d="M4 31C0 26 8 10 20 4c6-3 9-3 9 1" stroke={color} strokeWidth="1.800" />
    </svg>
  );
}

export default function App() {
  return (
    <Screen>
      <GlobalStyle />
      <AppHeader />
      <Workspace />
      <StatusBar />
      <DesktopBar />
      <QueryDialog />
      <FloatSearch aria-label="搜索"><Search size={29} strokeWidth={1.8} /></FloatSearch>
      <Meter />
      <Gadget>
        <GadgetDial>
          <svg width="60" height="60" viewBox="0 0 60 60" fill="none" strokeWidth="1.500">
            <path d="M30 5a25 25 0 0 1 25 25" stroke="#3fd6cf" />
            <path d="M55 30a25 25 0 0 1-25 25" stroke="#a5e06a" />
            <path d="M30 55A25 25 0 0 1 6 37" stroke="#f2c243" />
          </svg>
          70<small>%</small>
        </GadgetDial>
        <GadgetSpeeds>
          <span>
            <svg width="7" height="7" viewBox="0 0 7 7"><path d="M3.500 7V1M.5 4l3-3 3 3" fill="none" stroke="#45b8f0" strokeWidth="1.500" /></svg>
            <b>0.6<em>K/s</em></b>
          </span>
          <span>
            <svg width="7" height="7" viewBox="0 0 7 7"><path d="M3.500 0v6M.5 3l3 3 3-3" fill="none" stroke="#2fb344" strokeWidth="1.500" /></svg>
            <b>0.6<em>K/s</em></b>
          </span>
        </GadgetSpeeds>
      </Gadget>
    </Screen>
  );
}
